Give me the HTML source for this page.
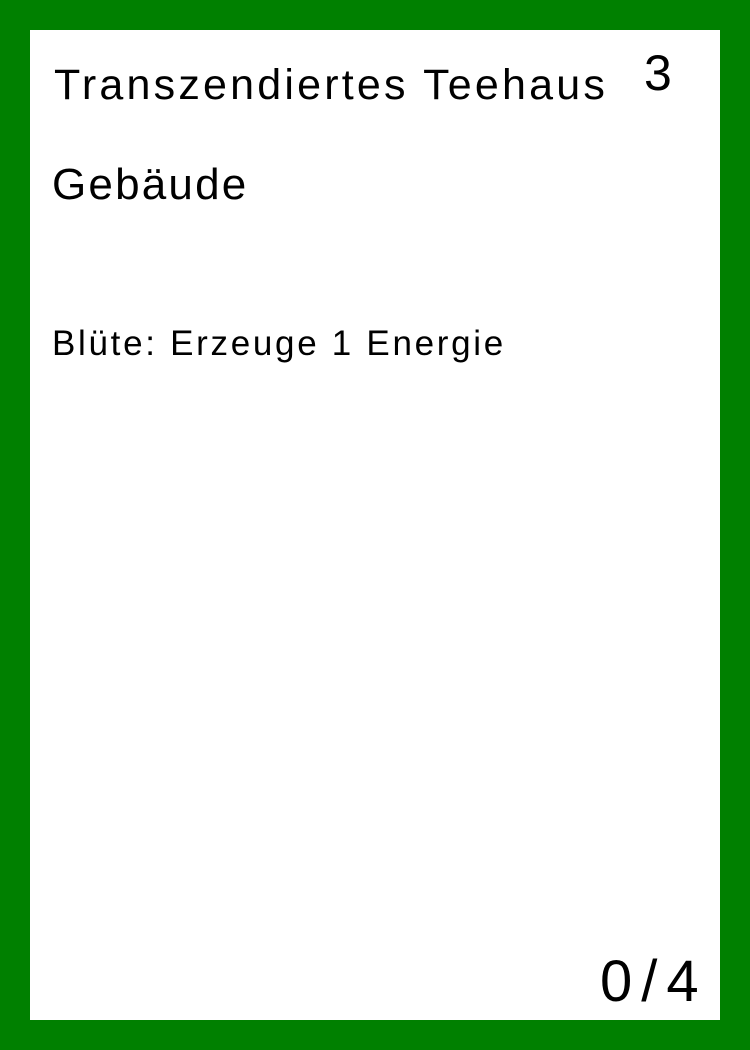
<!DOCTYPE html>
<html><head><meta charset="utf-8"><style>
html,body{margin:0;padding:0;}
body{width:750px;height:1050px;background:#008000;position:relative;overflow:hidden;font-family:"Liberation Sans",sans-serif;color:#000;}
.card{position:absolute;left:30px;top:30px;width:690px;height:990px;background:#fff;}
.t{position:absolute;white-space:nowrap;line-height:1;}
</style></head><body>
<div class="card"></div>
<div class="t" style="left:54px;top:64px;font-size:43px;letter-spacing:3.2px;">Transzendiertes Teehaus</div>
<div class="t" style="left:644px;top:48px;font-size:50px;">3</div>
<div class="t" style="left:52px;top:163px;font-size:44px;letter-spacing:2.2px;">Gebäude</div>
<div class="t" style="left:52px;top:326px;font-size:35px;letter-spacing:2.7px;">Blüte: Erzeuge 1 Energie</div>
<div class="t" style="left:600px;top:953px;font-size:58px;letter-spacing:9px;">0/4</div>
</body></html>
